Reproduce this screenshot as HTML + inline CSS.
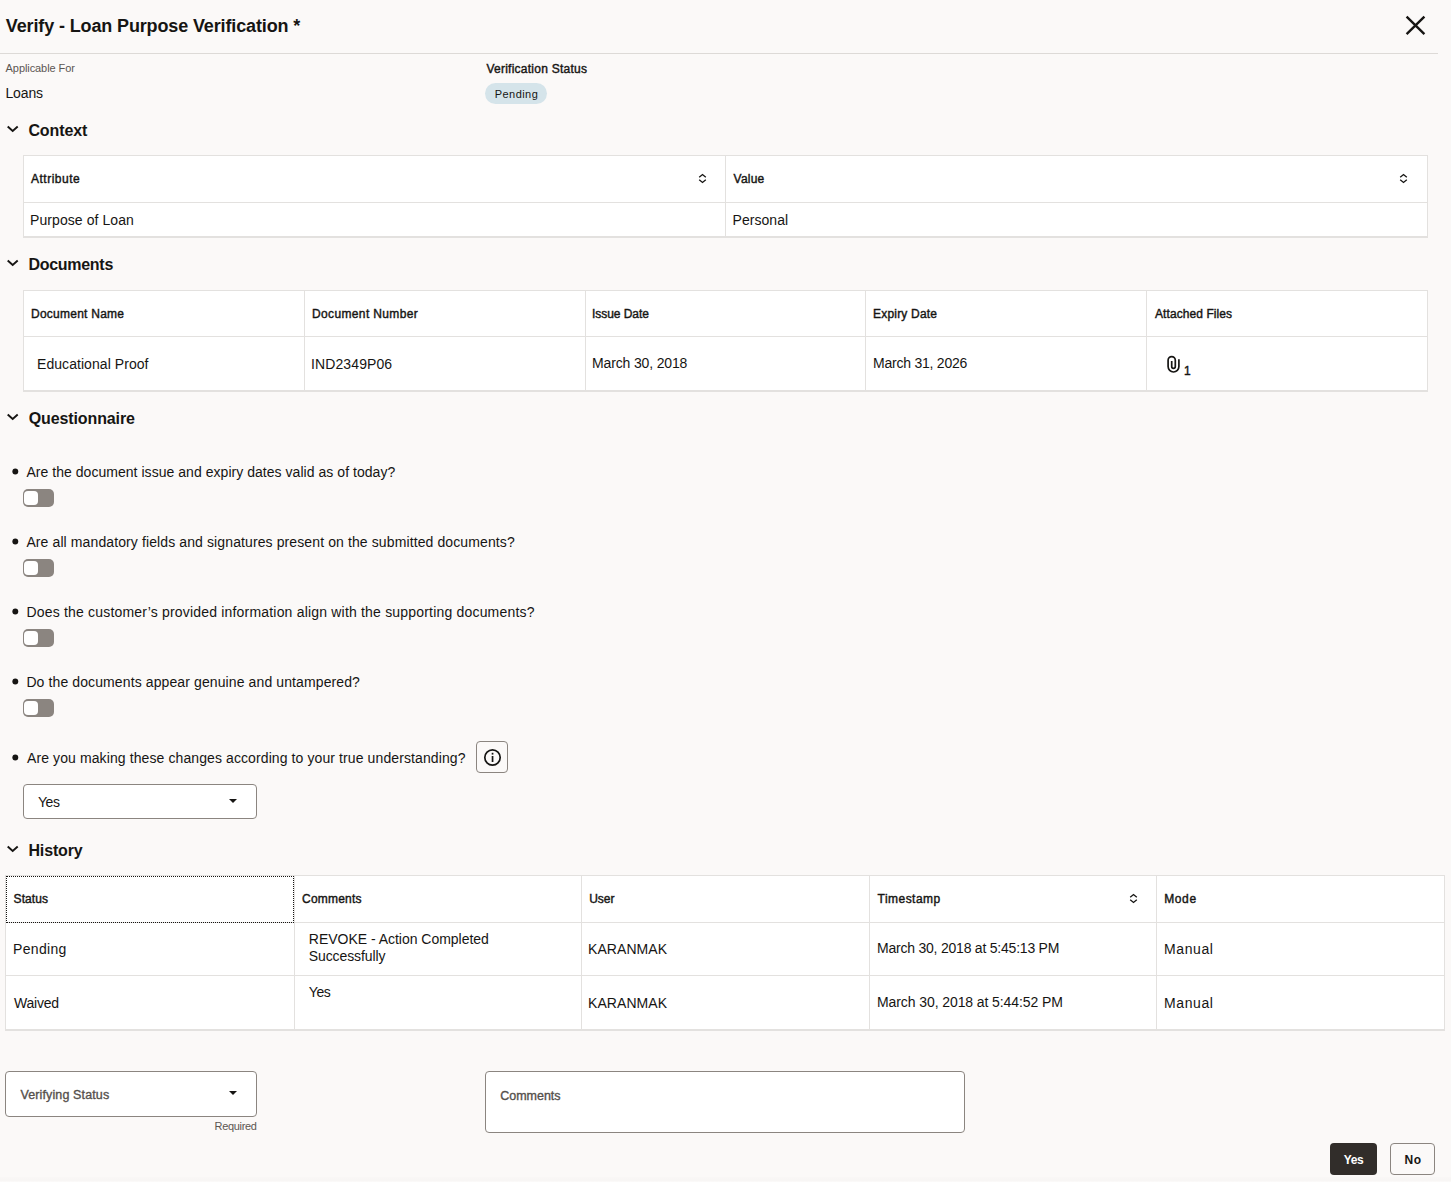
<!DOCTYPE html>
<html lang="en">
<head>
<meta charset="utf-8">
<title>Verify - Loan Purpose Verification</title>
<style>
html,body{margin:0;padding:0;}
body{width:1451px;height:1182px;position:relative;overflow:hidden;background:#fbf9f8;color:#161513;font-family:"Liberation Sans",sans-serif;font-size:14px;line-height:1;}
.abs{position:absolute;white-space:nowrap;line-height:1;}
.title{font-size:18px;font-weight:bold;}
.hline{position:absolute;left:0;top:53px;width:1438px;height:1px;background:#dddad7;}
.lbl{font-size:11px;color:#5b5652;}
.req{font-size:11px;color:#5b5652;}
.val{font-size:14px;}
.lbl2{font-size:12px;-webkit-text-stroke:0.4px #161513;}
.bdg{font-size:11px;}
.badge{position:absolute;left:485px;top:83px;width:62px;height:21px;border-radius:10.5px;background:#d5e4ea;}
.sec{font-size:16px;font-weight:bold;}
.chev{position:absolute;left:6px;width:13px;height:8px;}
.tb{position:absolute;box-sizing:border-box;background:#fff;border:1px solid #e3e1df;border-bottom:2px solid #e3e1df;}
.tb i{position:absolute;display:block;background:#e3e1df;}
.tb i.v{top:0;bottom:0;width:1px;}
.tb i.h{left:0;right:0;height:1px;}
.focus{position:absolute;left:6px;top:876px;width:286px;height:45px;border:1px dotted #161513;}
.th{font-size:12px;-webkit-text-stroke:0.4px #161513;}
.td{font-size:14px;}
.one{font-size:12px;-webkit-text-stroke:0.4px #161513;}
.sort{position:absolute;width:9px;height:11px;}
.q{font-size:14px;}
.sw{position:absolute;left:23px;width:31px;height:18px;border-radius:5px;background:#8b8580;}
.sw i{position:absolute;left:0.6px;top:2px;width:14.4px;height:14.4px;border-radius:4px;background:#fff;}
.box{position:absolute;box-sizing:border-box;border:1px solid #8b8580;border-radius:4px;background:#fff;}
.arrow{position:absolute;width:0;height:0;border-left:4.5px solid transparent;border-right:4.5px solid transparent;border-top:4.5px solid #161513;}
.btn{position:absolute;box-sizing:border-box;height:32px;top:1143px;border-radius:4px;}
.fl{font-size:12.5px;color:#55504c;-webkit-text-stroke:0.35px #55504c;}
.bt{font-size:12px;font-weight:bold;}
.botstrip{position:absolute;left:0;top:1177px;width:1451px;height:5px;background:linear-gradient(#f9f7f6,#f8f6f5 70%,#fcfbfa);}
</style>
</head>
<body>
<svg class="abs" style="left:1404px;top:14px" width="23" height="23" viewBox="0 0 23 23"><path d="M2.6 2.6 L20.4 20.1 M20.4 2.6 L2.6 20.1" stroke="#161513" stroke-width="2.4" fill="none"/></svg>
<div class="hline"></div>
<div class="botstrip"></div>
<div class="badge"></div>
<svg class="chev" style="top:125.3px" viewBox="0 0 13 8"><path d="M1.7 1.5 L6.7 6.0 L11.7 1.5" stroke="#161513" stroke-width="1.9" fill="none"/></svg>
<div class="tb" style="left:23px;top:155px;width:1405px;height:83px"><i class="v" style="left:701px"></i><i class="h" style="top:46px"></i></div>
<svg class="sort" style="left:697.8px;top:173px" viewBox="0 0 9 11"><path d="M1.2 4.3 L4.5 1.5 L7.8 4.3 M1.2 6.7 L4.5 9.5 L7.8 6.7" stroke="#161513" stroke-width="1.3" fill="none"/></svg>
<svg class="sort" style="left:1399.3px;top:173px" viewBox="0 0 9 11"><path d="M1.2 4.3 L4.5 1.5 L7.8 4.3 M1.2 6.7 L4.5 9.5 L7.8 6.7" stroke="#161513" stroke-width="1.3" fill="none"/></svg>
<svg class="chev" style="top:259.3px" viewBox="0 0 13 8"><path d="M1.7 1.5 L6.7 6.0 L11.7 1.5" stroke="#161513" stroke-width="1.9" fill="none"/></svg>
<div class="tb" style="left:23px;top:290px;width:1405px;height:102px"><i class="v" style="left:280px"></i><i class="v" style="left:561px"></i><i class="v" style="left:841px"></i><i class="v" style="left:1122px"></i><i class="h" style="top:45px"></i></div>
<svg class="abs" style="left:1165px;top:354px" width="17" height="21" viewBox="0 0 17 21"><path d="M13.9 5.2 V12.6 A5.4 5.4 0 0 1 3.1 12.6 V6.2 A3.6 3.6 0 0 1 10.3 6.2 V12.6 A1.8 1.8 0 0 1 6.7 12.6 V7" stroke="#161513" stroke-width="1.7" fill="none"/></svg>
<svg class="chev" style="top:413.3px" viewBox="0 0 13 8"><path d="M1.7 1.5 L6.7 6.0 L11.7 1.5" stroke="#161513" stroke-width="1.9" fill="none"/></svg>
<svg class="abs" style="left:11px;top:467px" width="9" height="9" viewBox="0 0 9 9"><circle cx="4.3" cy="4.5" r="2.95" fill="#161513"/></svg>
<div class="sw" style="top:489px"><i></i></div>
<svg class="abs" style="left:11px;top:537px" width="9" height="9" viewBox="0 0 9 9"><circle cx="4.3" cy="4.5" r="2.95" fill="#161513"/></svg>
<div class="sw" style="top:559px"><i></i></div>
<svg class="abs" style="left:11px;top:607px" width="9" height="9" viewBox="0 0 9 9"><circle cx="4.3" cy="4.5" r="2.95" fill="#161513"/></svg>
<div class="sw" style="top:629px"><i></i></div>
<svg class="abs" style="left:11px;top:677px" width="9" height="9" viewBox="0 0 9 9"><circle cx="4.3" cy="4.5" r="2.95" fill="#161513"/></svg>
<div class="sw" style="top:699px"><i></i></div>
<svg class="abs" style="left:11px;top:753px" width="9" height="9" viewBox="0 0 9 9"><circle cx="4.3" cy="4.5" r="2.95" fill="#161513"/></svg>
<div class="box" style="left:476px;top:741px;width:32px;height:32px;background:transparent"></div>
<svg class="abs" style="left:482px;top:747px" width="21" height="21" viewBox="0 0 21 21"><circle cx="10.5" cy="10.5" r="7.7" stroke="#161513" stroke-width="1.7" fill="none"/><rect x="9.7" y="9" width="1.7" height="6" fill="#161513"/><rect x="9.7" y="5.8" width="1.7" height="1.8" fill="#161513"/></svg>
<div class="box" style="left:23px;top:784px;width:234px;height:35px"></div>
<div class="arrow" style="left:229px;top:799px"></div>
<svg class="chev" style="top:845.3px" viewBox="0 0 13 8"><path d="M1.7 1.5 L6.7 6.0 L11.7 1.5" stroke="#161513" stroke-width="1.9" fill="none"/></svg>
<div class="tb" style="left:5px;top:875px;width:1440px;height:156px"><i class="v" style="left:288px"></i><i class="v" style="left:575px"></i><i class="v" style="left:863px"></i><i class="v" style="left:1150px"></i><i class="h" style="top:46px"></i><i class="h" style="top:99px"></i></div>
<div class="focus"></div>
<svg class="sort" style="left:1129px;top:893.1px" viewBox="0 0 9 11"><path d="M1.2 4.3 L4.5 1.5 L7.8 4.3 M1.2 6.7 L4.5 9.5 L7.8 6.7" stroke="#161513" stroke-width="1.3" fill="none"/></svg>
<div class="box" style="left:5px;top:1071px;width:252px;height:46px"></div>
<div class="arrow" style="left:229px;top:1091px"></div>
<div class="box" style="left:485px;top:1071px;width:480px;height:62px"></div>
<div class="btn" style="left:1330px;width:47px;background:#312d2a"></div>
<div class="btn" style="left:1390px;width:45px;border:1px solid #8b8580"></div>
<div class="abs title" style="left:5.8px;top:17px;letter-spacing:-0.13px">Verify - Loan Purpose Verification *</div>
<div class="abs lbl" style="left:5.6px;top:63px;letter-spacing:-0.08px">Applicable For</div>
<div class="abs val" style="left:5.4px;top:86px;letter-spacing:-0.12px">Loans</div>
<div class="abs lbl2" style="left:486.4px;top:63px;letter-spacing:0.25px">Verification Status</div>
<div class="abs bdg" style="left:494.8px;top:89px;letter-spacing:0.43px">Pending</div>
<div class="abs sec" style="left:28.4px;top:123px;letter-spacing:-0.1px">Context</div>
<div class="abs th" style="left:31px;top:173px;letter-spacing:0.5px">Attribute</div>
<div class="abs th" style="left:733.6px;top:173px;letter-spacing:0.2px">Value</div>
<div class="abs td" style="left:30px;top:213px;letter-spacing:0.08px">Purpose of Loan</div>
<div class="abs td" style="left:732.6px;top:213px;letter-spacing:0.04px">Personal</div>
<div class="abs sec" style="left:28.4px;top:257px;letter-spacing:-0.28px">Documents</div>
<div class="abs th" style="left:31px;top:308px;letter-spacing:0.25px">Document Name</div>
<div class="abs th" style="left:312px;top:308px;letter-spacing:0.36px">Document Number</div>
<div class="abs th" style="left:592px;top:308px;letter-spacing:-0.06px">Issue Date</div>
<div class="abs th" style="left:873px;top:308px;letter-spacing:0.2px">Expiry Date</div>
<div class="abs th" style="left:1155px;top:308px;letter-spacing:0.08px">Attached Files</div>
<div class="abs td" style="left:37px;top:357px;letter-spacing:0.06px">Educational Proof</div>
<div class="abs td" style="left:311px;top:357px;letter-spacing:0.11px">IND2349P06</div>
<div class="abs td" style="left:592px;top:356px;letter-spacing:-0.15px">March 30, 2018</div>
<div class="abs td" style="left:873px;top:356px;letter-spacing:-0.23px">March 31, 2026</div>
<div class="abs one" style="left:1184px;top:365px">1</div>
<div class="abs sec" style="left:28.8px;top:411px;letter-spacing:-0.12px">Questionnaire</div>
<div class="abs q" style="left:26.4px;top:465px;letter-spacing:0.04px">Are the document issue and expiry dates valid as of today?</div>
<div class="abs q" style="left:26.4px;top:535px;letter-spacing:0.11px">Are all mandatory fields and signatures present on the submitted documents?</div>
<div class="abs q" style="left:26.4px;top:605px;letter-spacing:0.19px">Does the customer&rsquo;s provided information align with the supporting documents?</div>
<div class="abs q" style="left:26.4px;top:675px;letter-spacing:0.11px">Do the documents appear genuine and untampered?</div>
<div class="abs q" style="left:27px;top:751px;letter-spacing:0.1px">Are you making these changes according to your true understanding?</div>
<div class="abs val" style="left:38px;top:795px;letter-spacing:-0.45px">Yes</div>
<div class="abs sec" style="left:28.4px;top:843px;letter-spacing:-0.13px">History</div>
<div class="abs th" style="left:13.6px;top:893px;letter-spacing:0.08px">Status</div>
<div class="abs th" style="left:302px;top:893px;letter-spacing:0.21px">Comments</div>
<div class="abs th" style="left:589.2px;top:893px;letter-spacing:-0.05px">User</div>
<div class="abs th" style="left:877.6px;top:893px;letter-spacing:0.46px">Timestamp</div>
<div class="abs th" style="left:1164.2px;top:893px;letter-spacing:0.63px">Mode</div>
<div class="abs td" style="left:13px;top:942px;letter-spacing:0.33px">Pending</div>
<div class="abs td" style="left:308.8px;top:932px;letter-spacing:-0.02px">REVOKE - Action Completed</div>
<div class="abs td" style="left:308.8px;top:949px;letter-spacing:-0.1px">Successfully</div>
<div class="abs td" style="left:588px;top:942px;letter-spacing:0.07px">KARANMAK</div>
<div class="abs td" style="left:877px;top:941px;letter-spacing:-0.22px">March 30, 2018 at 5:45:13 PM</div>
<div class="abs td" style="left:1164px;top:942px;letter-spacing:0.6px">Manual</div>
<div class="abs td" style="left:14px;top:996px;letter-spacing:-0.22px">Waived</div>
<div class="abs td" style="left:308.8px;top:985px;letter-spacing:-0.45px">Yes</div>
<div class="abs td" style="left:588px;top:996px;letter-spacing:0.07px">KARANMAK</div>
<div class="abs td" style="left:877px;top:995px;letter-spacing:-0.09px">March 30, 2018 at 5:44:52 PM</div>
<div class="abs td" style="left:1164px;top:996px;letter-spacing:0.6px">Manual</div>
<div class="abs fl" style="left:20.4px;top:1089px;letter-spacing:0.13px">Verifying Status</div>
<div class="abs req" style="left:214.6px;top:1121px;letter-spacing:-0.33px">Required</div>
<div class="abs fl" style="left:500.2px;top:1090px;letter-spacing:-0.01px">Comments</div>
<div class="abs bt" style="left:1343.8px;top:1154px;letter-spacing:-0.45px;color:#fff">Yes</div>
<div class="abs bt" style="left:1404.4px;top:1154px;letter-spacing:0.7px">No</div>
</body>
</html>
